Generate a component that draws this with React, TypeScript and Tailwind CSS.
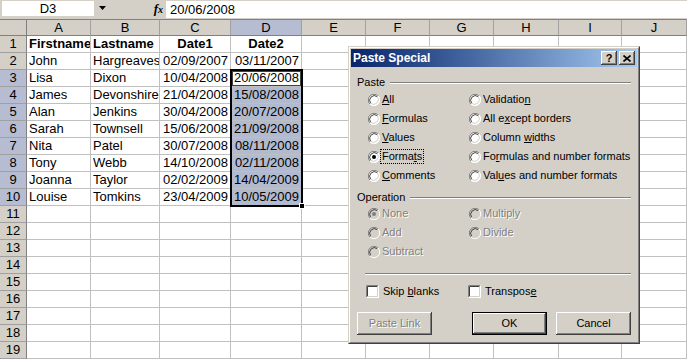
import React from "react";

const LETTERS = ["A", "B", "C", "D", "E", "F", "G", "H", "I", "J"];

const DATA: string[][] = [
  ["Firstname", "Lastname", "Date1", "Date2"],
  ["John", "Hargreaves", "02/09/2007", "03/11/2007"],
  ["Lisa", "Dixon", "10/04/2008", "20/06/2008"],
  ["James", "Devonshire", "21/04/2008", "15/08/2008"],
  ["Alan", "Jenkins", "30/04/2008", "20/07/2008"],
  ["Sarah", "Townsell", "15/06/2008", "21/09/2008"],
  ["Nita", "Patel", "30/07/2008", "08/11/2008"],
  ["Tony", "Webb", "14/10/2008", "02/11/2008"],
  ["Joanna", "Taylor", "02/02/2009", "14/04/2009"],
  ["Louise", "Tomkins", "23/04/2009", "10/05/2009"],
];

function Radio({ checked = false, disabled = false }: { checked?: boolean; disabled?: boolean }) {
  return (
    <svg width="12" height="12" viewBox="0 0 12 12" className="shrink-0">
      <circle cx="6" cy="6" r="5.5" fill={disabled ? "#d4d0c8" : "#ffffff"} />
      <path d="M1.9 10.1 A5.8 5.8 0 0 1 10.1 1.9" stroke="#808080" strokeWidth="1" fill="none" />
      <path d="M10.1 1.9 A5.8 5.8 0 0 1 1.9 10.1" stroke="#ffffff" strokeWidth="1" fill="none" />
      <path d="M2.7 9.3 A4.7 4.7 0 0 1 9.3 2.7" stroke="#404040" strokeWidth="1" fill="none" />
      <path d="M9.3 2.7 A4.7 4.7 0 0 1 2.7 9.3" stroke="#d4d0c8" strokeWidth="1" fill="none" />
      {checked && <circle cx="6" cy="6" r="2" fill={disabled ? "#808080" : "#000000"} />}
    </svg>
  );
}

function Check() {
  return (
    <svg width="13" height="13" viewBox="0 0 13 13" className="shrink-0">
      <rect x="0" y="0" width="13" height="13" fill="#ffffff" />
      <path d="M0.5 12.5 V0.5 H12.5" stroke="#808080" fill="none" />
      <path d="M1.5 11.5 V1.5 H11.5" stroke="#404040" fill="none" />
      <path d="M1.5 11.5 H11.5 V1.5" stroke="#d4d0c8" fill="none" />
      <path d="M0.5 12.5 H12.5 V0.5" stroke="#ffffff" fill="none" />
    </svg>
  );
}

function Lbl({ pre, u, post, disabled = false, focus = false }: { pre: string; u?: string; post?: string; disabled?: boolean; focus?: boolean }) {
  return (
    <span
      className={
        "px-px leading-[13px] whitespace-nowrap border " +
        (focus ? "border-dotted border-black " : "border-transparent ") +
        (disabled ? "text-[#808080] [text-shadow:1px_1px_0_#ffffff]" : "text-black")
      }
    >
      {pre}
      {u && <span className="underline underline-offset-1">{u}</span>}
      {post}
    </span>
  );
}

function RadioRow({ children, checked, disabled }: { children: React.ReactNode; checked?: boolean; disabled?: boolean }) {
  return (
    <div className="h-[19px] flex items-center">
      <Radio checked={checked} disabled={disabled} />
      {children}
    </div>
  );
}

function GroupHeader({ title, mt }: { title: string; mt: string }) {
  return (
    <div className={"h-[13px] flex items-center gap-[5px] " + mt}>
      <span className="leading-[13px]">{title}</span>
      <div className="flex-1 h-[2px] border-t border-t-[#808080] border-b border-b-white" />
    </div>
  );
}

const btnShadow =
  "shadow-[inset_-1px_-1px_0_#404040,inset_1px_1px_0_#ffffff,inset_-2px_-2px_0_#808080,inset_2px_2px_0_#d4d0c8]";

export default function App() {
  return (
    <div
      className="relative w-[687px] h-[360px] overflow-hidden bg-white text-black"
      style={{ fontFamily: '"Liberation Sans", Arial, sans-serif' }}
    >
      {/* Formula bar */}
      <div className="h-[19px] bg-[#d4d0c8] flex items-start">
        <div className="ml-[2px] mt-px w-[92px] h-[15px] bg-white text-[13px] leading-[15px] text-center">D3</div>
        <div className="w-[16px] h-[16px] flex items-center justify-center">
          <svg width="7" height="4" viewBox="0 0 7 4">
            <path d="M0 0 H7 L3.5 4 Z" fill="#000" />
          </svg>
        </div>
        <div className="w-[56px] h-[17px] flex items-center justify-end pr-[3px]">
          <span
            className="italic font-bold text-[13px] leading-none"
            style={{ fontFamily: '"Liberation Serif", "Times New Roman", serif' }}
          >
            f<span className="text-[10px]">x</span>
          </span>
        </div>
        <div className="flex-1 mt-px h-[17px] bg-white text-[13px] leading-[17px] pl-[4px]">20/06/2008</div>
      </div>

      {/* Grid */}
      <div className="grid grid-cols-[27px_64px_69px_71px_71px_64px_64px_64px_65px_63px_65px] text-[13px]">
        <div className="h-[17px] bg-[#d4d0c8] border-t border-t-[#808080] border-r border-r-[#808080] border-b border-b-[#808080]" />
        {LETTERS.map((l) => (
          <div
            key={l}
            className={
              "h-[17px] border-t border-t-[#808080] border-r border-r-[#a0a0a0] border-b border-b-[#808080] text-center leading-[15px] " +
              (l === "D" ? "bg-[#b6bdd2]" : "bg-[#d4d0c8]")
            }
          >
            {l}
          </div>
        ))}
        {Array.from({ length: 19 }).map((_, r) => {
          const rowNum = r + 1;
          const hl = rowNum >= 3 && rowNum <= 10;
          const vals = DATA[r] || [];
          return (
            <React.Fragment key={rowNum}>
              <div
                className={
                  "h-[17px] border-r border-r-[#808080] border-b border-b-[#a0a0a0] text-center leading-[16px] " +
                  (hl ? "bg-[#b6bdd2]" : "bg-[#d4d0c8]")
                }
              >
                {rowNum}
              </div>
              {LETTERS.map((l, c) => {
                const v = vals[c] || "";
                const isHeader = rowNum === 1;
                const isDate = c >= 2 && !isHeader;
                const sel = c === 3 && rowNum >= 4 && rowNum <= 10;
                return (
                  <div
                    key={l}
                    className={
                      "h-[17px] border-r border-b border-[#c0c0c0] leading-[16px] whitespace-nowrap overflow-hidden " +
                      (isHeader ? "font-bold " : "") +
                      (isHeader && c >= 2 ? "text-center " : isDate ? "text-right pr-[2px] " : "pl-[2px] ") +
                      (sel ? "bg-[#b2bad0]" : "bg-white")
                    }
                  >
                    {v}
                  </div>
                );
              })}
            </React.Fragment>
          );
        })}
      </div>

      {/* Selection border */}
      <div className="absolute left-[230px] top-[69px] w-[73px] h-[138px] border-2 border-black pointer-events-none" />
      <div className="absolute left-[232px] top-[71px] w-[69px] h-[15px] border border-[#404040] pointer-events-none" />
      <div className="absolute left-[299px] top-[203px] w-[6px] h-[6px] bg-black border border-white" />

      {/* Dialog */}
      <div
        className="absolute left-[348px] top-[46px] w-[292px] bg-[#d4d0c8] border border-t-[#d4d0c8] border-l-[#d4d0c8] border-r-[#404040] border-b-[#404040]"
        style={{ fontFamily: '"Liberation Sans", Tahoma, sans-serif' }}
      >
        <div className="border border-t-white border-l-white border-r-[#808080] border-b-[#808080] p-px">
          <div className="h-[18px] flex items-center bg-linear-to-r from-[#0a246a] to-[#a6caf0] pl-[2px] pr-[2px]">
            <span className="flex-1 text-white font-bold text-[12px] leading-[18px]">Paste Special</span>
            <div className={"w-[16px] h-[14px] bg-[#d4d0c8] flex items-center justify-center text-[11px] font-bold leading-none " + btnShadow}>
              ?
            </div>
            <div className={"ml-[2px] w-[16px] h-[14px] bg-[#d4d0c8] flex items-center justify-center " + btnShadow}>
              <svg width="8" height="7" viewBox="0 0 8 7">
                <path d="M0.5 0.5 L7.5 6.5 M7.5 0.5 L0.5 6.5" stroke="#000" strokeWidth="1.6" />
              </svg>
            </div>
          </div>

          <div className="px-[6px] pb-[6px] text-[11px]">
            <GroupHeader title="Paste" mt="mt-[9px]" />
            <div className="mt-px pl-[11px] grid grid-cols-[101px_1fr]">
              <div>
                <RadioRow><Lbl pre="" u="A" post="ll" /></RadioRow>
                <RadioRow><Lbl pre="" u="F" post="ormulas" /></RadioRow>
                <RadioRow><Lbl pre="" u="V" post="alues" /></RadioRow>
                <RadioRow checked><Lbl pre="Forma" u="t" post="s" focus /></RadioRow>
                <RadioRow><Lbl pre="" u="C" post="omments" /></RadioRow>
              </div>
              <div>
                <RadioRow><Lbl pre="Validatio" u="n" post="" /></RadioRow>
                <RadioRow><Lbl pre="All e" u="x" post="cept borders" /></RadioRow>
                <RadioRow><Lbl pre="Column " u="w" post="idths" /></RadioRow>
                <RadioRow><Lbl pre="Fo" u="r" post="mulas and number formats" /></RadioRow>
                <RadioRow><Lbl pre="Val" u="u" post="es and number formats" /></RadioRow>
              </div>
            </div>

            <GroupHeader title="Operation" mt="mt-[6px]" />
            <div className="pl-[11px] grid grid-cols-[101px_1fr]">
              <div>
                <RadioRow checked disabled><Lbl pre="None" disabled /></RadioRow>
                <RadioRow disabled><Lbl pre="Add" disabled /></RadioRow>
                <RadioRow disabled><Lbl pre="Subtract" disabled /></RadioRow>
              </div>
              <div>
                <RadioRow disabled><Lbl pre="Multiply" disabled /></RadioRow>
                <RadioRow disabled><Lbl pre="Divide" disabled /></RadioRow>
              </div>
            </div>

            <div className="mt-[12px] ml-[8px] h-[2px] border-t border-t-[#808080] border-b border-b-white" />

            <div className="mt-[7px] pl-[9px] h-[18px] grid grid-cols-[102px_1fr] items-center">
              <div className="flex items-center gap-[2px]">
                <Check />
                <Lbl pre="Skip " u="b" post="lanks" />
              </div>
              <div className="flex items-center gap-[2px]">
                <Check />
                <Lbl pre="Transpos" u="e" post="" />
              </div>
            </div>

            <div className="mt-[12px] flex h-[23px]">
              <div className={"w-[75px] h-[23px] flex items-center justify-center text-[#808080] [text-shadow:1px_1px_0_#ffffff] " + btnShadow}>
                Paste Link
              </div>
              <div className="ml-[40px] w-[75px] h-[23px] border border-black">
                <div className={"w-full h-full flex items-center justify-center " + btnShadow}>OK</div>
              </div>
              <div className={"ml-[9px] w-[75px] h-[23px] flex items-center justify-center " + btnShadow}>Cancel</div>
            </div>
          </div>
        </div>
      </div>
    </div>
  );
}
